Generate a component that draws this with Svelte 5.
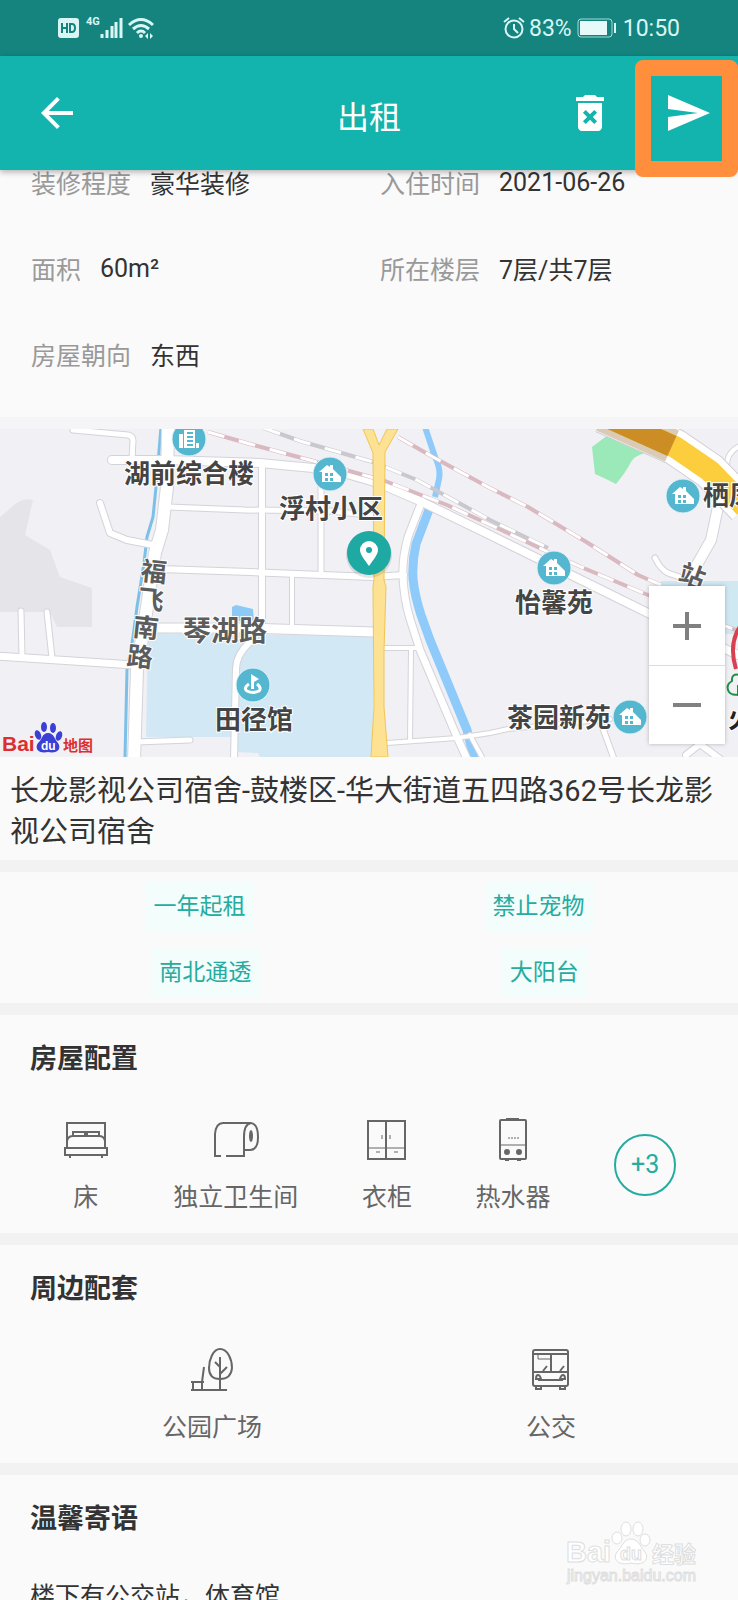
<script>
    const details = [
        { label: "装修程度", value: "豪华装修" },
        { label: "入住时间", value: "2021-06-26" },
        { label: "面积", value: "60m²" },
        { label: "所在楼层", value: "7层/共7层" },
        { label: "房屋朝向", value: "东西" },
    ];

    const tagRows = [
        ["一年起租", "禁止宠物"],
        ["南北通透", "大阳台"],
    ];

    const facilities = [
        { icon: "bed", name: "床" },
        { icon: "bath", name: "独立卫生间" },
        { icon: "wardrobe", name: "衣柜" },
        { icon: "heater", name: "热水器" },
    ];

    const surroundings = [
        { icon: "park", name: "公园广场" },
        { icon: "bus", name: "公交" },
    ];

    /** d - line of the road, w - its width */
    const roads = [
        { d: "M73 1L128 6Q133 7 133 12L132 30", w: 5 },
        { d: "M112 31L165 31L260 34L313 39L347 45L378 54L420 72L490 106L648 184L738 226", w: 8 },
        { d: "M100 74L110 104L127 111L153 116", w: 6 },
        { d: "M168 78L245 81L330 82L376 87", w: 5 },
        { d: "M160 140L250 143L373 148L404 146", w: 6 },
        { d: "M-4 227L134 236", w: 7 },
        { d: "M21 182L22 227", w: 5 },
        { d: "M47 183L52 229", w: 5 },
        { d: "M136 313L190 311", w: 5 },
        { d: "M262 34L262 200", w: 6 },
        { d: "M321 56L321 146", w: 5 },
        { d: "M292 146L292 200", w: 4 },
        { d: "M262 200L250 213Q236 226 236 240L234 330", w: 6 },
        { d: "M422 72L408 108Q402 130 403 148Q404 170 410 190L420 221L457 308L468 332", w: 7 },
        { d: "M384 219L417 219", w: 4 },
        { d: "M411 221L410 312", w: 4 },
        { d: "M387 314L457 309L490 304L508 300L610 290", w: 4 },
        { d: "M470 306L483 330", w: 4 },
        { d: "M601 294L614 330", w: 5 },
        { d: "M655 129Q661 141 668 144L688 151", w: 5 },
        { d: "M718 78L711 111L690 148", w: 10 },
        { d: "M742 16Q727 22 727 36Q728 46 742 54", w: 4 },
        { d: "M686 326L700 315L720 330", w: 6 },
        { d: "M150 199L250 199L375 203", w: 9 },
        { d: "M168 -4L167 58L162 101L155 124L147 178L137 241L134 332", w: 12 },
    ];

    const railways = [
        { d: "M264 -1L300 12L373 33L417 51L490 91L548 119", color: "#c9c9cd" },
        { d: "M208 3L250 15L317 33L385 52L447 76L495 98L548 123L581 138L648 166L738 202", color: "#d9b8c0" },
        { d: "M398 8L433 28L488 58L528 78L588 114L638 146L661 156", color: "#d9b8c0" },
    ];

    const places = [
        { x: 189, y: 10, icon: "tower", name: "湖前综合楼", tx: 189, ty: 54 },
        { x: 330, y: 45, icon: "house", name: "浮村小区", tx: 331, ty: 89 },
        { x: 253, y: 256, icon: "sport", name: "田径馆", tx: 254, ty: 300 },
        { x: 554, y: 139, icon: "house", name: "怡馨苑", tx: 554, ty: 183 },
        { x: 630, y: 288, icon: "house", name: "茶园新苑", tx: 559, ty: 298 },
        { x: 683, y: 67, icon: "house", name: "栖凤", tx: 729, ty: 76 },
    ];

    const street = [
        { char: "福", x: 153, y: 152 },
        { char: "飞", x: 150, y: 180 },
        { char: "南", x: 145, y: 208 },
        { char: "路", x: 139, y: 237 },
    ];
</script>

{#snippet icon(name)}
    <svg class="icon" viewBox="0 0 48 48" aria-hidden="true">
        {#if name === "bed"}
            <path d="M5 28V7h38v21M11 20v-4h12v4M25 20v-4h12v4M5 32v-7q1-5 6-5h26q5 0 6 5v7" />
            <path d="M3 32h42v7H3zM8 39v3M40 39v3" />
        {:else if name === "bath"}
            <path d="M9 40H3V18Q4 7 11 7h28M14 40h18V21Q32 8 39 7" />
            <path d="M39 7q7 1 7 14t-8 13h-6" />
            <ellipse cx="39" cy="20" rx="2" ry="6" fill="#666" stroke="none" />
        {:else if name === "wardrobe"}
            <path d="M5 5h37v38H5zM23 5v38" />
            <path class="thin" d="M5 32h37M19 19v4M27 19v4M13 36h4M31 36h4" />
        {:else if name === "heater"}
            <rect x="11" y="4" width="26" height="39" rx="1" />
            <path d="M17 3h13M16 44h4M28 44h4" />
            <path class="thin" d="M11 29h26" />
            <path class="thin" stroke-dasharray="2 1" d="M19 22h11" />
            <circle cx="18" cy="36" r="2" fill="#666" />
            <circle cx="30" cy="36" r="2" fill="#666" />
        {:else if name === "park"}
            <path d="M32 3C25 3 21 14 21 22Q21 33 32 33T44 22C44 14 40 3 32 3zM32 11v33M32 28l7-7M32 21l-5-5" />
            <path d="M3 44h36M3 36h13M16 21l-2 15M5 36v8M14 36v8" />
        {:else}
            <rect x="6" y="4" width="35" height="36" rx="2" />
            <path d="M6 8h35M6 26h35M24 8v18M11 34h25M16 25l4-5M33 25l4-5" />
            <path class="thin" d="M11 8v5h13" />
            <path d="M9 33q0-4 2-4t3 4zM33 33q1-4 3-4t2 4zM9 40v3h5v-3M33 40v3h5v-3" />
        {/if}
    </svg>
{/snippet}

{#snippet facility(item)}
    <li class="facility">
        {@render icon(item.icon)}
        <span>{item.name}</span>
    </li>
{/snippet}

<div class="screen">
    <div class="status">
        <div class="status__group">
            <svg width="21" height="20" viewBox="0 0 21 20" aria-hidden="true">
                <rect width="21" height="20" rx="3" fill="#d9f6f5" />
                <path
                    d="M4 5v10M9 5v10M4 10h5M12 6h2q3 0 3 4t-3 4h-2z"
                    fill="none"
                    stroke="#15847f"
                    stroke-width="2"
                />
            </svg>
            <span class="status__net">4G</span>
            <svg width="23" height="22" viewBox="0 0 23 22" aria-hidden="true">
                <path
                    d="M2 17v4M7 13v8M12 9v12M16 5v16M21 1v20"
                    stroke="#d9f6f5"
                    stroke-width="3"
                />
            </svg>
            <svg class="status__wifi" width="26" height="22" viewBox="0 0 26 22" aria-hidden="true">
                <path
                    d="M1 8Q13-3 25 8M5 12q8-7 16 0M9 16q4-4 8 0"
                    fill="none"
                    stroke="#d9f6f5"
                    stroke-width="3"
                />
                <circle cx="13" cy="19" r="2" fill="#d9f6f5" />
                <path d="M20 16v6l-3-3zM22 16v6l3-3z" fill="#d9f6f5" />
            </svg>
        </div>
        <div class="status__group">
            <svg width="22" height="22" viewBox="0 0 22 22" aria-hidden="true">
                <g fill="none" stroke="#d9f6f5" stroke-width="2">
                    <circle cx="11" cy="12" r="8.5" />
                    <path d="M11 7v5l4 4M1 5l5-4M21 5l-5-4" />
                </g>
            </svg>
            <span class="status__percent">83%</span>
            <svg width="40" height="20" viewBox="0 0 40 20" aria-hidden="true">
                <rect x="1" y="1" width="34" height="18" rx="3" fill="none" stroke="#a4dcd9" />
                <rect x="3" y="3" width="27" height="14" fill="#e6faf9" />
                <rect x="37" y="5" width="2" height="10" fill="#d9f6f5" />
            </svg>
            <span class="status__time">10:50</span>
        </div>
    </div>

    <header class="bar">
        <button class="bar__button bar__back" aria-label="返回">
            <svg viewBox="0 0 24 24" aria-hidden="true">
                <path d="M20 11H7.83l5.59-5.59L12 4l-8 8 8 8 1.41-1.41L7.83 13H20v-2z" />
            </svg>
        </button>
        <h1 class="bar__title">出租</h1>
        <div class="bar__actions">
            <button class="bar__button" aria-label="删除">
                <svg viewBox="0 0 24 24" aria-hidden="true">
                    <path
                        d="M6 19c0 1.1.9 2 2 2h8c1.1 0 2-.9 2-2V7H6v12zm2.460-7.120l1.410-1.410L12 12.590l2.120-2.120 1.410 1.410L13.410 14l2.120 2.120-1.410 1.410L12 15.410l-2.120 2.120-1.410-1.410L10.590 14l-2.130-2.120zM15.500 4l-1-1h-5l-1 1H5v2h14V4z"
                    />
                </svg>
            </button>
            <button class="bar__button" aria-label="发布">
                <svg viewBox="0 0 24 24" aria-hidden="true">
                    <path d="M2.010 21L23 12 2.010 3 2 10l15 2-15 2z" />
                </svg>
            </button>
        </div>
        <div class="bar__highlight"></div>
    </header>

    <main class="content">
        <dl class="details">
            {#each details as item}
                <div class="details__item">
                    <dt>{item.label}</dt>
                    <dd>{item.value}</dd>
                </div>
            {/each}
        </dl>

        <section class="map">
            <svg class="map__canvas" viewBox="0 0 738 328" preserveAspectRatio="xMidYMid slice">
                <rect width="738" height="328" fill="#f0f0f5" />
                <path d="M12 78Q22 68 33 71L25 106L50 121L60 148L92 159V198H57L50 183H0V88z" fill="#e5e5e9" />
                <path d="M148 204L373 207V328H260L258 324L237 323L232 308H146z" fill="#d2e8f4" />
                <path d="M232 178L236 176L253 180L254 192H232z" fill="#8ccaf5" />
                <path d="M592 18L608 6L645 24Q634 27 631 33T623 46L616 55L606 50L595 45z" fill="#9be8b8" />
                <path d="M661 152H738V205H720V170H661z" fill="#cfe8f2" />

                <g fill="none" stroke-linejoin="round">
                    <path
                        d="M161 -2L156 58L153 88L147 108L144 134L137 178L133 208L127 241L125 328"
                        stroke="#7cc0e8"
                        stroke-width="3"
                    />
                    <path d="M425 -2L435 28Q441 40 439 50L435 68" stroke="#8ecbfa" stroke-width="6" />
                    <path
                        d="M430 78L416 115Q412 132 413 150Q415 168 421 186L430 211L467 301L474 330"
                        stroke="#8ecbfa"
                        stroke-width="9"
                    />
                    <g stroke="#d3d3da" stroke-linecap="round">
                        {#each roads as road}
                            <path d={road.d} stroke-width={road.w + 2} />
                        {/each}
                    </g>
                    <g stroke="#fff" stroke-linecap="round">
                        {#each roads as road}
                            <path d={road.d} stroke-width={road.w} />
                        {/each}
                    </g>
                    {#each railways as rail}
                        <path d={rail.d} stroke={rail.color} stroke-width="4" />
                        <path d={rail.d} stroke="#fff" stroke-width="3" stroke-dasharray="17 15" />
                    {/each}

                    <path d="M603 -14L675 18L710 42L745 78" stroke="#cfcfd6" stroke-width="37" />
                    <path d="M603 -14L675 18L710 42L745 78" stroke="#fff" stroke-width="35" />
                    <path d="M603 -14L672 17" stroke="#d9cbb5" stroke-width="34" />
                    <path d="M610 -11L675 18L710 42L745 78" stroke="#fccd3c" stroke-width="22" />
                    <path d="M603 -14L672 17" stroke="#cc8d24" stroke-width="22" />
                </g>

                <path
                    d="M363 0H373L379 16L387 0H398L385 23L384 151L386 158L384 221V278L388 328H371L374 278L373 158L374 151L373 24z"
                    fill="#fde293"
                    stroke="#f2c552"
                />
                <path d="M741 196Q728 214 736 240" fill="none" stroke="#d8404f" stroke-width="4" />
                <path
                    d="M740 246Q731 244 732 252Q725 256 729 263Q732 267 740 265M738 256v11"
                    fill="none"
                    stroke="#1d9148"
                    stroke-width="2"
                />

                <g class="map__label">
                    {#each street as part}
                        <text transform="translate({part.x} {part.y}) rotate(6)" class="map__label--road">{part.char}</text>
                    {/each}
                    <text x="225" y="212" class="map__label--road map__label--wide">琴湖路</text>
                    <text transform="translate(689 156) rotate(20)" class="map__label--road">站</text>
                    <text x="741" y="299" fill="#222">火</text>
                    {#each places as place}
                        <text x={place.tx} y={place.ty}>{place.name}</text>
                    {/each}
                </g>

                {#each places as place}
                    <g transform="translate({place.x} {place.y})">
                        <circle r="17" fill="#55b7cf" stroke="#e2f3f7" stroke-width="1" />
                        {#if place.icon === "house"}
                            <path d="M-11-2L-3-9L0-7V-9H3V-5L7-1L11 3V8H-8V-2z" fill="#fff" />
                            <path
                                d="M-5-1h3v3h-3zM0-1h3v3H0zM-5 4h3v3h-3zM0 4h3v3H0z"
                                fill="#55b7cf"
                            />
                        {:else if place.icon === "tower"}
                            <path d="M-10-5h4V9h-4zM-5-9H6V9H-5zM7 4h3v5H7z" fill="#fff" />
                            <path
                                d="M-2-6h6M-2-2h6M-2 2h6M-2 6h6"
                                stroke="#55b7cf"
                                stroke-width="2"
                            />
                        {:else}
                            <path d="M-2-11L6-6L1-3V4H-2z" fill="#fff" />
                            <path
                                d="M-4-1Q-10 3-6 6Q0 9 6 6Q9 3 4-1"
                                fill="none"
                                stroke="#fff"
                                stroke-width="3"
                            />
                        {/if}
                    </g>
                {/each}

                <g transform="translate(369 124)">
                    <circle r="23" cy="2" fill="#000" opacity="0.1" />
                    <circle r="22" fill="#1fa9a3" />
                    <path d="M0 13C-5 6-9 1-9-3A9 9 0 0 1 9-3C9 1 5 6 0 13z" fill="#fff" />
                    <circle cy="-3" r="3" fill="#1fa9a3" />
                </g>

                <g class="map__brand">
                    <text x="2" y="322" font-size="21">Bai</text>
                    <text x="63" y="322" font-size="15">地图</text>
                    <g fill="#3a3fd6">
                        <ellipse cx="38" cy="306" rx="3" ry="5" transform="rotate(-20 38 306)" />
                        <ellipse cx="44" cy="298" rx="3" ry="5" />
                        <ellipse cx="53" cy="299" rx="3" ry="5" />
                        <ellipse cx="59" cy="307" rx="3" ry="5" transform="rotate(20 59 307)" />
                        <path d="M48 304C54 304 55 311 58 314C62 320 57 325 48 323C39 325 34 320 38 314C42 311 42 304 48 304z" />
                    </g>
                    <text x="41" y="321" font-size="12" class="map__du">du</text>
                </g>
            </svg>
            <div class="zoom">
                <button class="zoom__button" aria-label="放大">
                    <svg viewBox="0 0 28 28" aria-hidden="true"><path d="M0 14h28M14 0v28" /></svg>
                </button>
                <button class="zoom__button" aria-label="缩小">
                    <svg viewBox="0 0 28 28" aria-hidden="true"><path d="M0 14h28" /></svg>
                </button>
            </div>
        </section>

        <p class="address">长龙影视公司宿舍-鼓楼区-华大街道五四路362号长龙影视公司宿舍</p>

        <section class="tags">
            {#each tagRows as row}
                <div class="tags__row">
                    {#each row as tag}
                        <span class="tags__item">{tag}</span>
                    {/each}
                </div>
            {/each}
        </section>

        <section class="block">
            <h2 class="block__title">房屋配置</h2>
            <ul class="block__list">
                {#each facilities as item}
                    {@render facility(item)}
                {/each}
                <li><button class="more">+3</button></li>
            </ul>
        </section>

        <section class="block">
            <h2 class="block__title">周边配套</h2>
            <ul class="block__list">
                {#each surroundings as item}
                    {@render facility(item)}
                {/each}
            </ul>
        </section>

        <section class="block">
            <h2 class="block__title">温馨寄语</h2>
            <p class="block__text">楼下有公交站，体育馆</p>
        </section>
    </main>

    <svg class="watermark" viewBox="0 0 134 68" aria-hidden="true">
        <g fill="#fff" stroke="#dedede">
            <text x="0" y="42" font-size="29" font-weight="700">Bai</text>
            <ellipse cx="51" cy="18" rx="5" ry="6" />
            <ellipse cx="60" cy="9" rx="5" ry="7" />
            <ellipse cx="72" cy="9" rx="5" ry="7" />
            <ellipse cx="79" cy="20" rx="5" ry="6" />
            <path d="M65 19C73 19 75 28 79 32C84 40 77 46 65 43C53 46 46 40 51 32C56 28 57 19 65 19z" />
            <text x="54" y="40" font-size="18" font-weight="700">du</text>
            <text x="86" y="42" font-size="22" font-weight="700">经验</text>
            <text x="1" y="61" font-size="16">jingyan.baidu.com</text>
        </g>
    </svg>
</div>

<style>
    :global(body) {
        margin: 0;
    }

    .screen {
        --main: #13b3ae;
        --accent: #25aca0;
        --line: #f2f2f3;
        position: relative;
        display: flex;
        flex-direction: column;
        height: 100vh;
        overflow: hidden;
        background-color: #fafafb;
        color: #333;
        font-family: Roboto, "Noto Sans CJK SC", sans-serif;
        font-size: 25px;
    }

    button {
        margin: 0;
        padding: 0;
        border: none;
        background: none;
        font: inherit;
        cursor: pointer;
    }

    .status {
        display: flex;
        flex: none;
        align-items: center;
        justify-content: space-between;
        height: 56px;
        padding: 0 58px;
        background-color: #15847f;
        color: #d9f6f5;
        font-size: 23px;
        box-sizing: border-box;
    }

    .status__group {
        display: flex;
        align-items: center;
    }

    .status__net {
        align-self: flex-start;
        margin-left: 7px;
        font-size: 11px;
        font-weight: 700;
        line-height: 10px;
    }

    .status__wifi {
        margin-left: 5px;
    }

    .status__percent {
        margin: 0 5px 0 4px;
    }

    .status__time {
        margin-left: 6px;
    }

    .bar {
        position: relative;
        z-index: 1;
        display: grid;
        flex: none;
        grid-template-columns: 1fr auto 1fr;
        align-items: center;
        height: 114px;
        padding: 0 26px;
        background-color: var(--main);
        box-shadow: 0 2px 6px rgba(0, 0, 0, 0.3);
        box-sizing: border-box;
    }

    .bar__button {
        width: 48px;
        height: 48px;
    }

    .bar__back {
        margin-left: 7px;
    }

    .bar__button svg {
        display: block;
        fill: #fff;
    }

    .bar__title {
        margin: 0;
        padding-top: 4px;
        color: #fff;
        font-size: 32px;
        font-weight: 400;
    }

    .bar__actions {
        display: flex;
        justify-content: flex-end;
        gap: 50px;
    }

    .bar__highlight {
        position: absolute;
        top: 4px;
        right: 0;
        bottom: -7px;
        width: 103px;
        border: 16px solid #ff8f3c;
        border-radius: 8px;
        box-sizing: border-box;
        pointer-events: none;
    }

    .content {
        flex: 1;
        min-height: 0;
        overflow-y: auto;
        margin-top: -6px;
        scrollbar-width: none;
    }

    .details {
        display: grid;
        grid-template-columns: 349px 1fr;
        row-gap: 50px;
        margin: 0;
        padding: 0 31px 45px;
        border-bottom: 12px solid #f5f5f7;
    }

    .details__item {
        display: flex;
        align-items: center;
        gap: 19px;
    }

    .details dt {
        color: #999;
    }

    .details dd {
        margin: 0;
    }

    .map {
        position: relative;
    }

    .map__canvas {
        display: block;
        width: 100%;
        height: 328px;
    }

    .map__label {
        fill: #444;
        stroke: #fff;
        stroke-width: 2px;
        paint-order: stroke;
        font-size: 26px;
        font-weight: 700;
        text-anchor: middle;
    }

    .map__label--road {
        fill: #5c5c5c;
    }

    .map__label--wide {
        font-size: 28px;
    }

    .map__brand {
        fill: #dc3030;
        font-family: "Liberation Sans", "Noto Sans CJK SC", sans-serif;
        font-weight: 700;
    }

    .map__du {
        fill: #fff;
    }

    .zoom {
        position: absolute;
        right: 13px;
        bottom: 13px;
        display: flex;
        flex-direction: column;
        width: 76px;
        background-color: #fff;
        box-shadow: 0 0 4px rgba(0, 0, 0, 0.25);
    }

    .zoom__button {
        display: flex;
        align-items: center;
        justify-content: center;
        height: 79px;
    }

    .zoom__button + .zoom__button {
        border-top: 1px solid #ddd;
    }

    .zoom__button svg {
        width: 28px;
        stroke: #808080;
        stroke-width: 4px;
    }

    .address {
        margin: 0;
        padding: 14px 10px 7px;
        border-bottom: 12px solid var(--line);
        font-size: 29px;
        line-height: 41px;
    }

    .tags {
        display: flex;
        flex-direction: column;
        gap: 16px;
        padding: 10px 30px 5px;
        border-bottom: 12px solid var(--line);
    }

    .tags__row {
        display: flex;
        justify-content: space-around;
    }

    .tags__item {
        padding: 0 8px;
        background-color: #f3fdfb;
        color: var(--accent);
        font-size: 23px;
        line-height: 50px;
    }

    .block {
        padding: 24px 30px 20px;
        border-bottom: 12px solid var(--line);
    }

    .block__title {
        margin: 0 0 37px;
        font-size: 27px;
        font-weight: 700;
        line-height: 40px;
    }

    .block__list {
        display: flex;
        align-items: center;
        justify-content: space-around;
        margin: 0;
        padding: 0;
        list-style: none;
    }

    .block__text {
        margin: 0;
    }

    .facility {
        display: flex;
        flex-direction: column;
        align-items: center;
        gap: 13px;
        color: #666;
    }

    .icon {
        width: 48px;
        height: 48px;
        fill: none;
        stroke: #666;
        stroke-width: 2px;
    }

    .icon .thin {
        stroke-width: 1px;
    }

    .more {
        width: 62px;
        height: 62px;
        border: 2px solid var(--accent);
        border-radius: 50%;
        color: var(--accent);
    }

    .watermark {
        position: absolute;
        right: 38px;
        bottom: 12px;
        width: 134px;
        height: 68px;
        font-family: "Liberation Sans", "Noto Sans CJK SC", sans-serif;
    }
</style>
